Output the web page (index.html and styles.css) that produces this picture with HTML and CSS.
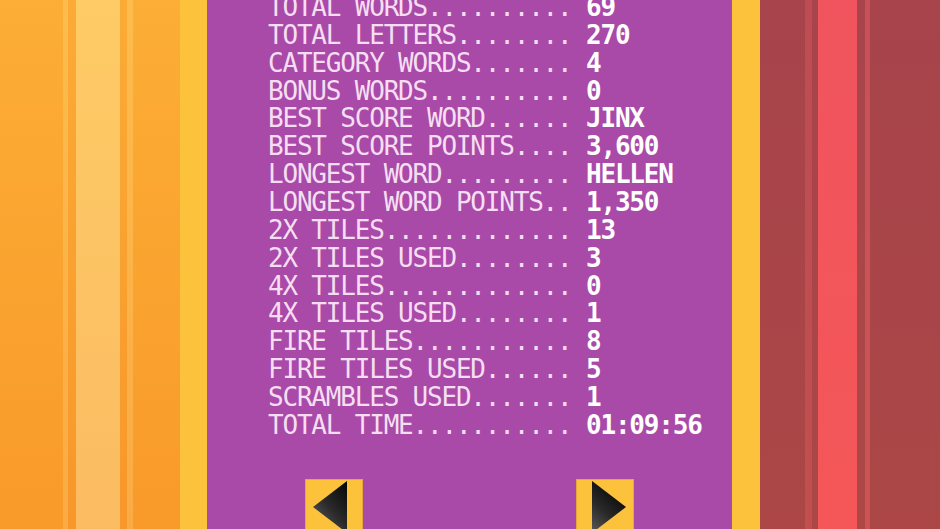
FILE: index.html
```html
<!DOCTYPE html>
<html>
<head>
<meta charset="utf-8">
<link rel="stylesheet" href="styles.css">
</head>
<body>
<div class="screen">
  <div class="stripes stripes-left"></div>
  <div class="rail"></div>
  <main class="panel">
    <div class="stats">
      <div class="label">TOTAL WORDS..........</div><div class="value">69</div>
      <div class="label">TOTAL LETTERS........</div><div class="value">270</div>
      <div class="label">CATEGORY WORDS.......</div><div class="value">4</div>
      <div class="label">BONUS WORDS..........</div><div class="value">0</div>
      <div class="label">BEST SCORE WORD......</div><div class="value">JINX</div>
      <div class="label">BEST SCORE POINTS....</div><div class="value">3,600</div>
      <div class="label">LONGEST WORD.........</div><div class="value">HELLEN</div>
      <div class="label">LONGEST WORD POINTS..</div><div class="value">1,350</div>
      <div class="label">2X TILES.............</div><div class="value">13</div>
      <div class="label">2X TILES USED........</div><div class="value">3</div>
      <div class="label">4X TILES.............</div><div class="value">0</div>
      <div class="label">4X TILES USED........</div><div class="value">1</div>
      <div class="label">FIRE TILES...........</div><div class="value">8</div>
      <div class="label">FIRE TILES USED......</div><div class="value">5</div>
      <div class="label">SCRAMBLES USED.......</div><div class="value">1</div>
      <div class="label">TOTAL TIME...........</div><div class="value">01:09:56</div>
    </div>
    <div class="nav">
      <button class="arrow-btn" aria-label="Previous">
        <svg width="58" height="58" viewBox="0 0 58 58">
          <defs>
            <linearGradient id="gl" x1="1" y1="0" x2="0.2" y2="1">
              <stop offset="0" stop-color="#050505"/>
              <stop offset="0.55" stop-color="#2a2a2a"/>
              <stop offset="1" stop-color="#5a5a5a"/>
            </linearGradient>
          </defs>
          <polygon points="42,2 8,28 42,54" fill="url(#gl)"/>
        </svg>
      </button>
      <button class="arrow-btn" aria-label="Next">
        <svg width="58" height="58" viewBox="0 0 58 58">
          <defs>
            <linearGradient id="gr" x1="0.6" y1="0" x2="0" y2="1">
              <stop offset="0" stop-color="#050505"/>
              <stop offset="0.55" stop-color="#2a2a2a"/>
              <stop offset="1" stop-color="#5a5a5a"/>
            </linearGradient>
          </defs>
          <polygon points="16,2 50,28 16,54" fill="url(#gr)"/>
        </svg>
      </button>
    </div>
  </main>
  <div class="rail rail-right"></div>
  <div class="stripes stripes-right"></div>
</div>
</body>
</html>
```

FILE: styles.css
```css
html, body {
  margin: 0;
  padding: 0;
  background: #a94aa9;
}

.screen {
  display: flex;
  width: 940px;
  height: 529px;
  overflow: hidden;
}

.stripes {
  width: 180px;
  flex: none;
  position: relative;
}

.stripes-left {
  background:
    linear-gradient(to bottom, rgba(255, 190, 60, 0.35), rgba(245, 120, 20, 0.25)),
    linear-gradient(to right,
      #faa532 0, #faa532 63px,
      #fcbc55 63px, #fcbc55 68px,
      #f9a132 68px, #f9a132 76px,
      #fdd27c 76px, #fdd27c 120px,
      #f9a132 120px, #f9a132 127px,
      #fcbc55 127px, #fcbc55 133px,
      #faa532 133px, #faa532 180px);
}

.stripes-right {
  width: 180px;
  background:
    linear-gradient(to bottom, rgba(160, 60, 80, 0.15), rgba(190, 80, 40, 0.15)),
    linear-gradient(to right,
      #a8454b 0, #a8454b 45px,
      #c24f55 45px, #c24f55 52px,
      #a8454b 52px, #a8454b 58px,
      #fe5860 58px, #fe5860 97px,
      #a9464b 97px, #a9464b 105px,
      #d0545a 105px, #d0545a 110px,
      #a8454b 110px, #a8454b 180px);
}

.rail {
  width: 27px;
  flex: none;
  background: #fcc23b;
}

.rail-right {
  width: 28px;
}

.panel {
  width: 525px;
  flex: none;
  background: #a94aa9;
  overflow: hidden;
  padding-left: 61px;
  box-sizing: border-box;
}

.stats {
  display: grid;
  grid-template-columns: 318px auto;
  margin-top: -6px;
  font-family: "DejaVu Sans Mono", "Liberation Mono", monospace;
  font-size: 26px;
  letter-spacing: -1.2px;
  line-height: 27.86px;
  white-space: pre;
}

.label {
  color: #f6def2;
}

.value {
  color: #ffffff;
  font-weight: bold;
}

.nav {
  display: flex;
  gap: 213px;
  margin-top: 39px;
  padding-left: 37px;
}

.arrow-btn {
  width: 58px;
  height: 58px;
  padding: 0;
  margin: 0;
  border: none;
  background: #fcc23b;
  box-shadow: inset 0 0 0 1px #e6a83a;
  display: block;
  flex: none;
}

.arrow-btn svg {
  display: block;
}
```
